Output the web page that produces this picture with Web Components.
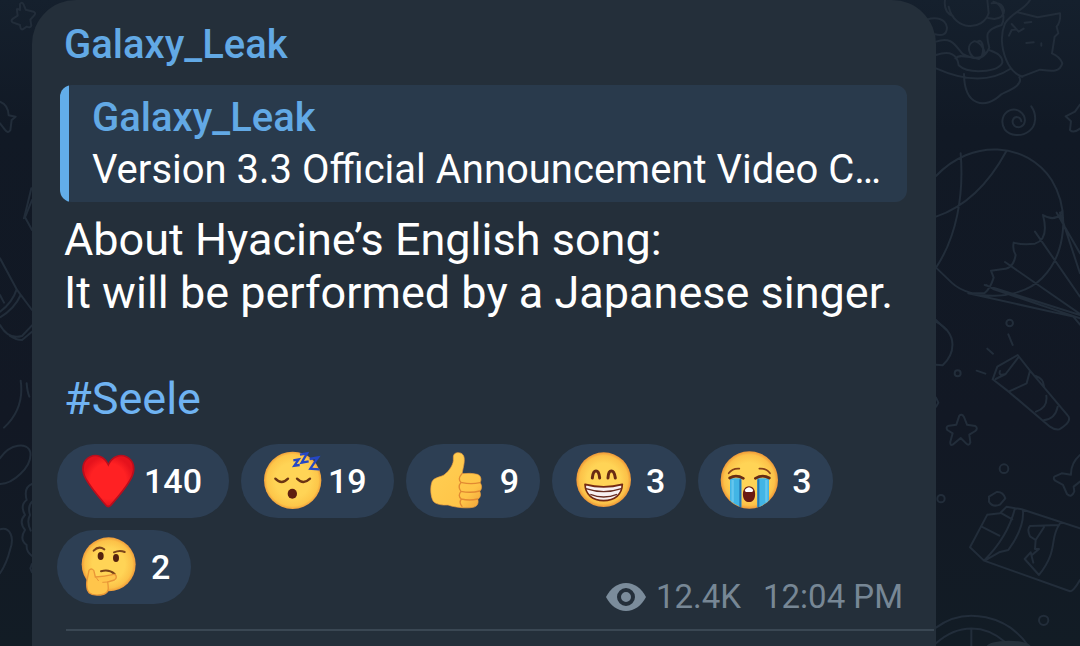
<!DOCTYPE html>
<html lang="en">
<head>
<meta charset="utf-8">
<meta name="viewport" content="width=device-width, initial-scale=1">
<title>Galaxy_Leak</title>
<style>
  body { margin: 0; background: #111a26; font-family: Roboto, "Liberation Sans", sans-serif; }
</style>
</head>
<body>
<chat-view>
  <message-bubble>
    <span slot="author">Galaxy_Leak</span>
    <message-quote slot="quote">
      <span slot="author">Galaxy_Leak</span>
      <span>Version 3.3 Official Announcement Video Collection</span>
    </message-quote>
    <message-text>About Hyacine’s English song:<br>It will be performed by a Japanese singer.<br><br><tag-link tag="Seele"></tag-link></message-text>
    <reaction-chip slot="reactions" label="Heart" count="140">
      <svg viewBox="84 63 180 180" aria-hidden="true">
        <defs><radialGradient id="heart-fill"><stop offset=".7" stop-color="#ff2123"/><stop offset="1" stop-color="#e5121c"/></radialGradient></defs>
        <path d="M175 104C163 78 139 72 121 80C99 90 94 116 103 137C115 166 145 199 168 226Q175 233 182 226C206 199 235 166 247 137C256 116 251 90 229 80C211 72 187 78 175 104Z" fill="url(#heart-fill)" stroke="#b90e1d" stroke-width="5"/>
      </svg>
    </reaction-chip>
    <reaction-chip slot="reactions" label="Sleeping face" count="19">
      <svg viewBox="96 63 180 180" aria-hidden="true">
        <defs><radialGradient id="sleep-fill"><stop offset=".6" stop-color="#ffd456"/><stop offset=".9" stop-color="#fdc649"/><stop offset="1" stop-color="#f0a03c"/></radialGradient></defs>
        <circle cx="188" cy="151" r="86" fill="url(#sleep-fill)"/>
        <path d="M136 146Q155 166 174 146M201 146Q220 166 240 146" fill="none" stroke="#6b3413" stroke-width="7" stroke-linecap="round"/>
        <ellipse cx="187" cy="191" rx="14" ry="15" fill="#5f1f10"/>
        <path d="M190 91L206 88L193 107L209 105M210 74L231 70L215 98L236 94M239 87L264 82L241 116L268 118" fill="none" stroke="#2547c5" stroke-width="7"/>
      </svg>
    </reaction-chip>
    <reaction-chip slot="reactions" label="Thumbs up" count="9">
      <svg viewBox="594 63 180 180" aria-hidden="true">
        <defs><linearGradient id="thumb-fill" x2="1" y2="1"><stop offset="0" stop-color="#ffd055"/><stop offset=".75" stop-color="#ffc548"/><stop offset="1" stop-color="#eea039"/></linearGradient></defs>
        <path d="M676 72C684 65 700 67 704 78C709 91 703 111 699 131Q726 128 745 133C757 137 758 151 753 158C760 166 759 178 752 184C757 194 754 204 746 208C750 219 745 230 732 232C710 236 677 232 657 225C638 226 621 223 613 214C605 201 602 171 610 153C617 142 635 141 645 135C662 122 675 101 673 86Q672 77 676 72Z" fill="url(#thumb-fill)" stroke="#ef9e3d" stroke-width="2"/>
        <path d="M699 131Q684 148 697 158M699 158Q726 164 753 158M696 184Q726 190 752 183M697 207Q722 213 746 207M696 157Q685 171 696 184Q685 197 697 207Q689 218 699 229" fill="none" stroke="#e28a32" stroke-width="4" stroke-linecap="round"/>
      </svg>
    </reaction-chip>
    <reaction-chip slot="reactions" label="Beaming face" count="3">
      <svg viewBox="99 63 180 180" aria-hidden="true">
        <defs><radialGradient id="beam-fill"><stop offset=".6" stop-color="#ffd456"/><stop offset=".88" stop-color="#fcc148"/><stop offset="1" stop-color="#ed9638"/></radialGradient></defs>
        <circle cx="191" cy="149" r="82" fill="url(#beam-fill)"/>
        <path d="M157 144Q159 123 168 123Q177 123 179 144M204 144Q205 123 214 123Q223 123 226 144" fill="none" stroke="#682b13" stroke-width="9" stroke-linecap="round"/>
        <path d="M135 163Q191 178 247 163C246 194 224 212 191 212C158 212 136 194 135 163Z" fill="#f7f0f1" stroke="#742912" stroke-width="5" stroke-linejoin="round"/>
        <path d="M138 176Q191 194 244 176M151 193Q191 209 231 193" fill="none" stroke="#672c20" stroke-width="4"/>
      </svg>
    </reaction-chip>
    <reaction-chip slot="reactions" label="Crying face" count="3">
      <svg viewBox="537 63 180 180" aria-hidden="true">
        <defs><radialGradient id="cry-fill"><stop offset=".6" stop-color="#ffd456"/><stop offset=".88" stop-color="#fcc148"/><stop offset="1" stop-color="#ee9839"/></radialGradient></defs>
        <circle cx="628" cy="150" r="86" fill="url(#cry-fill)"/>
        <path d="M570 145H604V232Q584 225 570 211ZM652 145H687V211Q673 226 652 232Z" fill="#42b5e5"/>
        <path d="M601 148V231M655 148V231" stroke="#2477b4" stroke-width="6"/>
        <path d="M578 150V217M679 150V217" stroke="#65c6ee" stroke-width="7"/>
        <path d="M566 130Q578 114 598 116M658 116Q679 114 690 130" fill="none" stroke="#874018" stroke-width="5" stroke-linecap="round"/>
        <path d="M569 144Q588 132 610 145M646 145Q668 132 688 144" fill="none" stroke="#672c13" stroke-width="8" stroke-linecap="round"/>
        <path d="M627 169C640 169 647 181 645 198C643 211 637 216 627 216C617 216 611 211 609 198C607 181 615 169 627 169Z" fill="#6a1a12"/>
        <path d="M614 180Q627 164 640 180L637 186H617Z" fill="#fff"/>
      </svg>
    </reaction-chip>
    <reaction-chip slot="reactions" label="Thinking face" count="2">
      <svg viewBox="114 51 180 180" aria-hidden="true">
        <defs><radialGradient id="think-fill"><stop offset=".6" stop-color="#ffd456"/><stop offset=".88" stop-color="#fcc148"/><stop offset="1" stop-color="#ef9b3a"/></radialGradient></defs>
        <circle cx="206" cy="133" r="81" fill="url(#think-fill)"/>
        <path d="M161 92Q176 76 193 88M222 97Q239 89 254 96" fill="none" stroke="#7b451b" stroke-width="6" stroke-linecap="round"/>
        <ellipse cx="182" cy="108" rx="9" ry="12" fill="#53210f"/><ellipse cx="228" cy="114" rx="9" ry="12" fill="#53210f"/>
        <path d="M183 154Q207 147 224 162" fill="none" stroke="#774118" stroke-width="6" stroke-linecap="round"/>
        <path d="M147 151C153 144 163 147 163 158L166 171Q193 170 221 163C230 162 232 176 223 180L203 186C206 204 207 217 193 222C176 227 157 226 147 218C138 207 139 194 141 181Z" fill="#ffc54b" stroke="#e99637" stroke-width="4"/>
        <path d="M168 172L176 183M202 186L187 187" stroke="#e99637" stroke-width="3"/>
      </svg>
    </reaction-chip>
    <message-meta slot="meta" views="12.4K" time="12:04 PM"></message-meta>
  </message-bubble>
</chat-view>

<script>
const define = (name, html, setup) => {
  const template = document.createElement('template');
  template.innerHTML = html;
  customElements.define(name, class extends HTMLElement {
    constructor() {
      super();
      this.attachShadow({ mode: 'open' }).append(template.content.cloneNode(true));
    }
    connectedCallback() { if (setup) setup(this, this.shadowRoot); }
  });
};

define('chat-wallpaper', `
<style>
  :host { display: block; background: linear-gradient(#15202d, #111925 20%, #121824 65%, #121c25); }
  svg { display: block; width: 100%; height: 100%; fill: none; stroke: #222d3a; stroke-width: 6; stroke-linecap: round; stroke-linejoin: round; }
</style>
<svg viewBox="0 0 1080 646" preserveAspectRatio="xMinYMin slice" aria-hidden="true">
  <g transform="scale(.3333)">
    <path d="M60 12Q66 4 71 14L77 29L101 35Q110 40 101 48L91 59L94 77Q91 85 80 80L68 88Q61 90 60 75L38 67Q31 62 39 56L53 47L51 31Q49 24 60 30Z"/>
    <path d="M0 305Q25 315 26 346L47 350L35 360L31 391Q24 402 14 388L0 370M94 565Q81 620 72 655"/>
  </g>
  <g transform="translate(0 200) scale(.3333)">
    <path d="M96 0L75 52L96 90M0 175L50 268L96 330M50 268Q37 308 0 335M62 285Q43 327 0 352M96 376L66 408Q25 420 0 375M96 395L66 420Q48 420 30 408M0 285L12 308M62 542Q74 625 12 683M80 550Q82 575 88 590M0 775C30 730 83 725 91 757C97 803 35 853 0 852M96 852Q70 862 80 900Q59 915 75 945Q55 965 75 990Q57 1018 80 1035Q78 1055 96 1068M96 905Q82 920 90 945Q79 965 92 992M0 988C31 980 44 1013 30 1050Q20 1090 0 1120M96 1092L91 1105L96 1117"/>
  </g>
  <g transform="translate(900 0) scale(.3333)">
    <path d="M135 0Q130 37 160 49M146 20C163 95 250 93 266 39L262 0M275 10Q307 5 312 30Q314 53 283 57L264 54M80 59C108 50 137 55 141 83C140 105 126 108 105 103M108 125C155 108 165 136 188 162C239 190 258 167 268 143C259 107 252 90 305 75C318 50 306 10 280 5M108 165C151 151 172 163 176 196C204 223 294 218 307 188C308 166 291 160 270 151M166 175C182 158 211 180 242 171C272 168 238 119 222 124C197 133 204 173 237 177C256 163 251 114 234 124M108 205Q243 265 330 207M192 222C193 320 257 329 304 283C327 271 371 255 358 232M390 0C374 29 337 37 315 70C297 113 308 160 325 193Q343 224 368 230M350 36L413 52L480 40Q483 63 470 80L475 100L464 110L456 160Q480 170 487 190C480 219 452 213 420 209L365 230M327 107L335 90L350 88M335 72L356 95L371 86M374 68L394 66M379 129L401 127M424 130L424 137"/>
    <path d="M394 319C412 345 408 378 388 393C365 411 330 409 314 388C300 365 309 339 329 331C352 323 374 339 375 361C373 380 355 387 343 377C333 366 339 352 350 351Q362 352 364 364M540 314L525 335L497 349L513 364L510 390Q520 401 540 386"/>
    <path d="M108 528C216 414 379 426 455 540C510 630 499 761 426 835C356 904 210 901 155 848L108 803M182 460C192 586 170 710 108 803M318 455Q236 606 108 650M429 645Q460 664 480 645L487 632M429 645Q448 718 405 731Q365 735 341 728Q337 750 347 765Q340 806 310 807L273 812L281 833Q271 866 254 879L205 880M254 855L540 945M258 855L282 868L540 955M315 786L540 942M405 695L540 890M470 638L540 760M480 638L540 820M205 880L520 950L540 974M108 960L138 989"/>
  </g>
  <g transform="translate(900 320) scale(.3333)">
    <circle cx="329" cy="9" r="10"/><circle cx="173" cy="160" r="9"/><circle cx="312" cy="446" r="13"/><circle cx="123" cy="536" r="11"/><circle cx="431" cy="901" r="14"/>
    <path d="M108 5C180 45 161 105 128 136L108 134M325 43L338 75M262 86L279 101M230 152L256 161M108 233L115 248L108 260M278 178L292 140L353 105L390 152L380 190L326 215ZM287 177L317 162L355 112M300 153Q294 169 317 162M390 152L503 286Q519 303 478 328Q463 330 450 320L326 215M407 168Q431 175 432 200M439 227Q444 263 408 275M473 260Q466 297 431 301"/>
    <path d="M178 287Q185 280 192 291L201 314L226 318Q235 325 226 333L208 344L211 367Q207 379 199 371L182 354L158 374Q150 378 151 365L158 340L142 330Q136 320 147 317L169 314ZM540 405Q512 430 513 464L485 460L463 470Q458 480 471 485L489 495L501 522Q515 535 523 514L521 500L540 485"/>
    <path d="M267 530L290 516Q309 514 316 535L300 554Q278 563 267 545ZM262 584L300 580L320 560L365 568L540 625M262 584L210 682L252 722L510 814Q520 814 540 780M345 565Q323 652 252 722M369 572Q373 624 325 690L300 696L258 720M305 580L337 598M245 620L298 647M390 618L477 615C448 659 476 691 417 765L374 717L392 697L400 728M477 615L483 606M390 618Q380 627 390 649L407 660L432 622M407 660L405 687L417 687L397 704"/>
    <path d="M108 923C198 856 325 889 385 978M108 970C175 909 256 913 315 966M214 928V978"/>
    <ellipse cx="326" cy="980" rx="66" ry="18" fill="#26313b" stroke="none"/>
  </g>
</svg>`);

define('chat-view', `
<style>
  :host { display: block; position: relative; overflow: hidden; }
  chat-wallpaper { position: absolute; inset: 0; }
  main { position: relative; display: flex; min-height: 100vh; padding: 0 144px 0 32px; }
</style>
<chat-wallpaper></chat-wallpaper>
<main><slot></slot></main>`);

define('message-bubble', `
<style>
  :host { display: block; flex: 1; min-width: 0; box-sizing: border-box; padding-top: 21px; background: #242f3a; border-radius: 44px 44px 0 0; color: #fff; }
  h1 { margin: 0 32px 16px; font-size: 40px; line-height: 48px; font-weight: 500; color: #62a9e5; }
  .quote { margin: 0 29px 11px 28px; }
  .body { margin: 0 16px 19px 32px; }
  .reactions { display: flex; flex-wrap: wrap; gap: 12px; margin: 0 25px; }
  .meta { display: flex; justify-content: flex-end; margin: -27px 33px 12px; }
  hr { height: 2px; margin: 0 2px 0 34px; border: 0; background: #3a4753; }
</style>
<article>
  <h1><slot name="author"></slot></h1>
  <div class="quote"><slot name="quote"></slot></div>
  <div class="body"><slot></slot></div>
  <div class="reactions"><slot name="reactions"></slot></div>
  <div class="meta"><slot name="meta"></slot></div>
  <hr>
</article>`);

define('message-quote', `
<style>
  :host { display: block; }
  blockquote { margin: 0; padding: 7px 24px 6px 32px; border-radius: 12px; background: linear-gradient(90deg, #62ade9 9px, #293a4c 9px); font-size: 40px; line-height: 52px; }
  div { overflow: hidden; white-space: nowrap; text-overflow: ellipsis; }
  .author { font-weight: 500; color: #62a9e5; }
</style>
<blockquote>
  <div class="author"><slot name="author"></slot></div>
  <div><slot></slot></div>
</blockquote>`);

define('message-text', `
<style>:host { display: block; font-size: 45px; line-height: 53px; }</style>
<slot></slot>`);

define('tag-link', `
<style>a { color: #6fb3f2; text-decoration: none; }</style>
<a></a>`, (host, root) => {
  const a = root.querySelector('a');
  a.textContent = '#' + host.getAttribute('tag');
  a.href = '#' + host.getAttribute('tag');
});

define('reaction-chip', `
<style>
  :host { display: block; }
  button { display: flex; align-items: center; gap: 6px; height: 74px; margin: 0; padding: 0 27px 0 21px; border: 0; border-radius: 37px; background: #2d3f54; color: #fff; font: 500 34px/40px Roboto, "Liberation Sans", sans-serif; cursor: pointer; }
  button.single { gap: 13px; padding-right: 21px; }
  ::slotted(svg) { display: block; width: 60px; height: 60px; }
</style>
<button type="button"><slot></slot><span></span></button>`, (host, root) => {
  const count = host.getAttribute('count');
  const button = root.querySelector('button');
  root.querySelector('span').textContent = count;
  button.classList.toggle('single', count.length === 1);
  button.setAttribute('aria-label', host.getAttribute('label') + ' ' + count);
});

define('message-meta', `
<style>
  :host { display: flex; align-items: center; font-size: 33px; line-height: 40px; color: #778795; }
  svg { width: 40px; height: 28px; margin-right: 10px; }
  .views { margin-right: 22px; }
</style>
<svg viewBox="0 0 120 84" aria-hidden="true">
  <path d="M0 42C13 16 35 0 60 0S107 16 120 42C107 68 85 84 60 84S13 68 0 42Z" fill="#7b8c9b"/>
  <circle cx="60" cy="42" r="21" fill="none" stroke="#242f3a" stroke-width="12"/>
</svg>
<span class="views"></span><time></time>`, (host, root) => {
  root.querySelector('.views').textContent = host.getAttribute('views');
  root.querySelector('time').textContent = host.getAttribute('time');
});
</script>
</body>
</html>
